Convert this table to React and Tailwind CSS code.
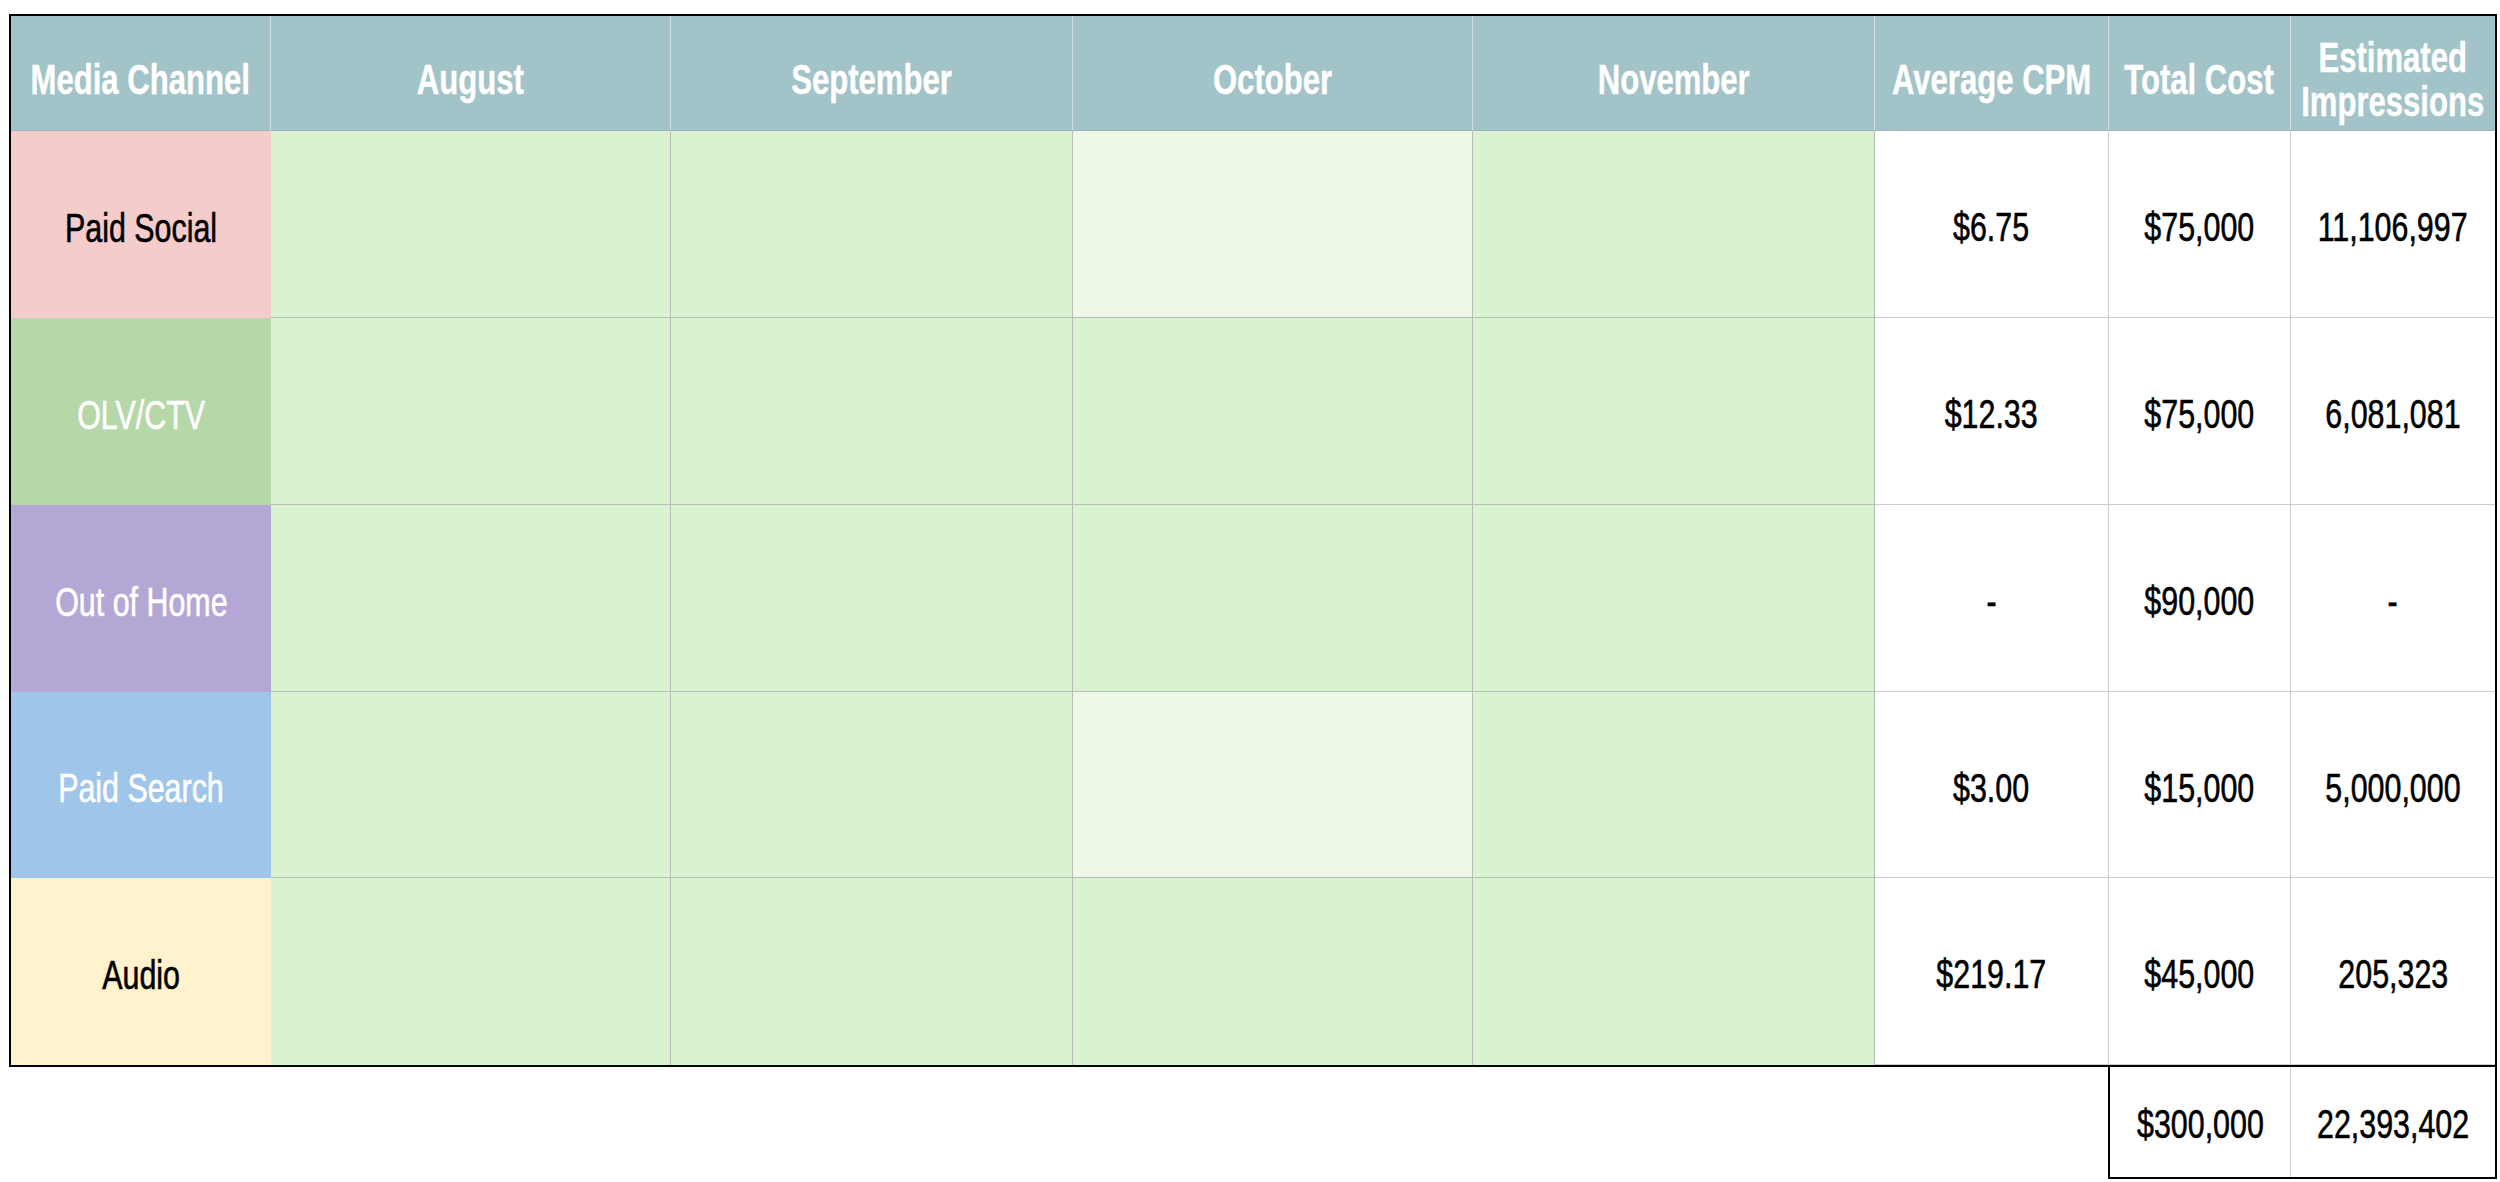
const months = ["August", "September", "October", "November"];

const rows = [
  { name: "Paid Social", bg: "bg-[#f4cccc]", text: "text-black", light: [2], cpm: "$6.75", cost: "$75,000", imp: "11,106,997" },
  { name: "OLV/CTV", bg: "bg-[#b6d7a8]", text: "text-white", light: [], cpm: "$12.33", cost: "$75,000", imp: "6,081,081" },
  { name: "Out of Home", bg: "bg-[#b4a7d6]", text: "text-white", light: [], cpm: "-", cost: "$90,000", imp: "-" },
  { name: "Paid Search", bg: "bg-[#9fc5e8]", text: "text-white", light: [2], cpm: "$3.00", cost: "$15,000", imp: "5,000,000" },
  { name: "Audio", bg: "bg-[#fff2cc]", text: "text-black", light: [], cpm: "$219.17", cost: "$45,000", imp: "205,323" },
];

// narrow, tall text like the sheet's condensed face
function Narrow({ children, bold }) {
  return (
    <span
      className={
        "inline-block whitespace-nowrap " +
        (bold
          ? "font-bold text-[42px] scale-x-[0.74] [-webkit-text-stroke:0.4px_currentColor]"
          : "scale-x-[0.76] [-webkit-text-stroke:0.6px_currentColor]")
      }
    >
      {children}
    </span>
  );
}

function HeadCell({ children, last }) {
  return (
    <div
      className={
        "flex items-center justify-center text-center pt-[14px] text-white leading-[44px] bg-[#a2c4c9] border-b border-[#9fb3b6] " +
        (last ? "" : "border-r border-r-[#cfe0e3]")
      }
    >
      {children}
    </div>
  );
}

function NumCell({ children, last }) {
  return (
    <div
      className={
        "flex items-center justify-center pt-[6px] bg-white text-black border-b border-[#cccccc] " +
        (last ? "" : "border-r border-r-[#cccccc]")
      }
    >
      <Narrow>{children}</Narrow>
    </div>
  );
}

export default function App() {
  return (
    <div className="min-h-screen bg-white pt-[14px] font-['Liberation_Sans',Arial,sans-serif] text-[40px]">
      <div className="ml-[9px] w-[2488px] border-2 border-black">
        <div className="grid grid-cols-[260px_400px_402px_400px_402px_234px_182px_204px] grid-rows-[115px_187px_187px_187px_186px_187px]">
          <HeadCell><Narrow bold>Media Channel</Narrow></HeadCell>
          {months.map((m) => (
            <HeadCell key={m}><Narrow bold>{m}</Narrow></HeadCell>
          ))}
          <HeadCell><Narrow bold>Average CPM</Narrow></HeadCell>
          <HeadCell><Narrow bold>Total Cost</Narrow></HeadCell>
          <HeadCell last>
            <Narrow bold>
              Estimated
              <br />
              Impressions
            </Narrow>
          </HeadCell>

          {rows.map((r, ri) => (
            <div key={r.name} className="contents">
              <div className={"flex items-center justify-center pt-[6px] " + r.bg + " " + r.text}>
                <Narrow>{r.name}</Narrow>
              </div>
              {months.map((m, mi) => (
                <div
                  key={m}
                  className={
                    "border-r border-[#b7bdb4] " +
                    (ri < rows.length - 1 ? "border-b " : "") +
                    (r.light.includes(mi) ? "bg-[#eef8e8]" : "bg-[#d9f2d0]")
                  }
                />
              ))}
              <NumCell>{r.cpm}</NumCell>
              <NumCell>{r.cost}</NumCell>
              <NumCell last>{r.imp}</NumCell>
            </div>
          ))}
        </div>
      </div>

      <div className="ml-[9px] w-[2488px] flex justify-end">
        <div className="w-[389px] h-[112px] border-x-2 border-b-2 border-black grid grid-cols-[181px_204px]">
          <div className="flex items-center justify-center pt-[4px] border-r border-[#cccccc]">
            <Narrow>$300,000</Narrow>
          </div>
          <div className="flex items-center justify-center pt-[4px]">
            <Narrow>22,393,402</Narrow>
          </div>
        </div>
      </div>
    </div>
  );
}
